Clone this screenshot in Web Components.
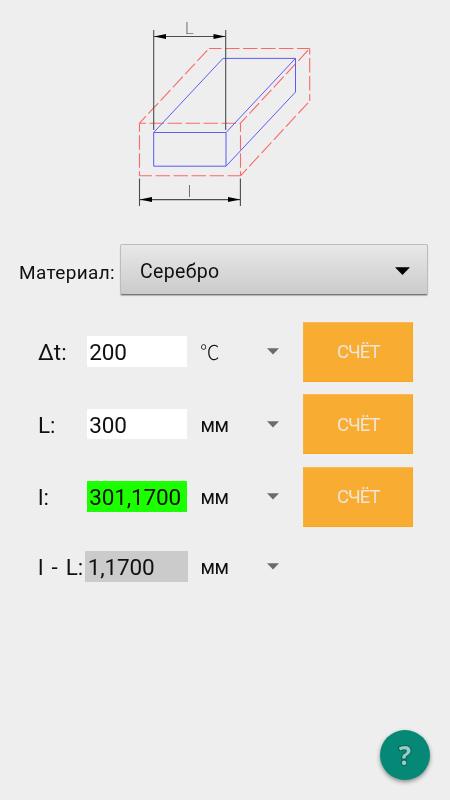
<!DOCTYPE html>
<html lang="ru">
<head>
<meta charset="utf-8">
<title>Тепловое расширение</title>
<style>
  html, body { margin: 0; height: 100%; }
  body {
    background: #eeeeee;
    color: #101010;
    font-family: Roboto, "Liberation Sans", sans-serif;
    font-weight: 380;
    overflow: hidden;
  }
</style>
</head>
<body>
<expansion-app></expansion-app>

<script>
// Drawing of the heated bar: solid = cold size, dashed = hot size
class BarDrawing extends HTMLElement {
  connectedCallback() {
    if (this.shadowRoot) return;
    this.attachShadow({ mode: 'open' }).innerHTML = `
      <style>
        :host { display: block; width: 190px; height: 210px; }
        svg { display: block; }
        .cold { stroke: #5b5bf6; stroke-width: 1; fill: none; }
        .hot { stroke: #fb6868; stroke-width: 1.1; fill: none; stroke-dasharray: 14.5 3.5; }
        .dim { stroke: #4c4c4c; stroke-width: 1.1; fill: none; }
        .arrow { fill: #000; }
        text { font-family: Roboto, sans-serif; font-weight: 200; fill: #333; text-anchor: middle; }
      </style>
      <svg width="190" height="210" viewBox="130 0 190 210">
        <g class="hot">
          <path d="M139.5 123.2H240.5" stroke-dashoffset="8"/>
          <path d="M139.5 175.8H240.5" stroke-dashoffset="2"/>
          <path d="M139.5 123.2V175.8" stroke-dashoffset="6"/>
          <path d="M240.5 123.2V175.8" stroke-dashoffset="6"/>
          <path d="M139.5 123.2L209 48.5" stroke-dashoffset="5"/>
          <path d="M209 48.5H309.7" stroke-dashoffset="2"/>
          <path d="M240.5 123.2L309.7 48.5" stroke-dashoffset="5"/>
          <path d="M309.7 48.5V101" stroke-dashoffset="8.5"/>
          <path d="M240.5 175.8L309.7 101" stroke-dashoffset="5"/>
        </g>
        <g class="cold">
          <path d="M153.7 132.5H226V166.2H153.7Z"/>
          <path d="M153.7 132.5L223 58.4H295.5L226 132.5"/>
          <path d="M295.5 58.4V92L226 166.2"/>
        </g>
        <g class="dim">
          <path d="M153.7 30V130M225.7 30V130M153.7 36.5H225.7"/>
          <path d="M139.5 178.5V206M240.4 178.5V206M139.5 199.6H240.4"/>
        </g>
        <path class="arrow" d="M154 36.5L166 34V39ZM225.5 36.5L213.5 34V39ZM139.8 199.6L152 197.1V202.1ZM240.2 199.6L228 197.1V202.1Z"/>
        <text x="189.4" y="34" font-size="17">L</text>
        <text x="189.4" y="196.8" font-size="17">l</text>
      </svg>`;
  }
}
customElements.define('bar-drawing', BarDrawing);

class MaterialSelect extends HTMLElement {
  connectedCallback() {
    if (this.shadowRoot) return;
    this.attachShadow({ mode: 'open' }).innerHTML = `
      <style>
        :host {
          display: flex;
          align-items: center;
          justify-content: space-between;
          box-sizing: border-box;
          width: 308px;
          height: 51px;
          padding: 0 17px 0 19px;
          border: 1px solid #bcbcbc;
          border-bottom: 1px solid #777;
          border-radius: 2px;
          background: linear-gradient(#e8e8e8, #cbcbcb);
          box-shadow: 0 1px 1px rgba(0, 0, 0, 0.25);
          font-size: 19.5px;
          letter-spacing: 0.35px;
        }
        span { padding-top: 3px; }
        svg { margin-top: 3px; }
      </style>
      <span><slot></slot></span>
      <svg width="15" height="8" viewBox="0 0 15 8"><path d="M0 0.3H15L7.5 8Z" fill="#000"/></svg>`;
  }
}
customElements.define('material-select', MaterialSelect);

// One line of the form: name, value, unit and an optional button
class ValueRow extends HTMLElement {
  connectedCallback() {
    if (this.shadowRoot) return;
    const button = this.hasAttribute('action') ? `<button type="button">${this.getAttribute('action')}</button>` : '';
    this.attachShadow({ mode: 'open' }).innerHTML = `
      <style>
        :host {
          display: grid;
          grid-template-columns: 47px 103px 79px 36.3px 110px;
          align-items: center;
          height: 60px;
          font-size: 22.5px;
        }
        .name { white-space: nowrap; padding-top: 1px; }
        .value {
          box-sizing: border-box;
          justify-self: center;
          width: 100px;
          height: 30.6px;
          padding-left: 2.7px;
          line-height: 32px;
          letter-spacing: -0.15px;
          background: var(--field, #fff);
        }
        :host([total]) .value { width: 103px; height: 31px; background: #cbcbcb; }
        :host([total]) .name { word-spacing: 2.4px; }
        .unit { padding-left: 12.4px; font-size: 19.5px; letter-spacing: -0.4px; padding-top: 2px; }
        svg { margin: 0; }
        button {
          height: 60px;
          padding: 1px 0 0;
          border: 1px solid #f9a716;
          border-top-color: #f9b95c;
          border-left-color: #f8b03f;
          background: #f8ac32;
          color: #f0e6d6;
          font: 380 18.5px Roboto, sans-serif;
          letter-spacing: -0.9px;
        }
      </style>
      <span class="name"><slot name="name"></slot></span>
      <span class="value"><slot></slot></span>
      <span class="unit"><slot name="unit"></slot></span>
      <svg width="12" height="7" viewBox="0 0 12 7"><path d="M0 0.2H12L6 6.6Z" fill="#6b6b6b"/></svg>
      ${button}`;
  }
}
customElements.define('value-row', ValueRow);

class HelpButton extends HTMLElement {
  connectedCallback() {
    if (this.shadowRoot) return;
    this.attachShadow({ mode: 'open' }).innerHTML = `
      <style>
        :host {
          display: flex;
          align-items: center;
          justify-content: center;
          width: 50px;
          height: 50px;
          border-radius: 50%;
          background: #058876;
          box-shadow: 0 2px 4px rgba(0, 0, 0, 0.42);
          color: #93cdc5;
          font: 700 26px "Open Sans", sans-serif;
        }
        span { -webkit-text-stroke: 2px #0a5f54; paint-order: stroke fill; }
      </style>
      <span><slot></slot></span>`;
  }
}
customElements.define('help-button', HelpButton);

class ExpansionApp extends HTMLElement {
  connectedCallback() {
    if (this.shadowRoot) return;
    this.attachShadow({ mode: 'open' }).innerHTML = `
      <style>
        /* own layer without a background: keeps glyph edges grey */
        :host { display: block; position: relative; width: 450px; height: 800px; will-change: transform; }
        bar-drawing { margin-left: 130px; }
        .page { display: flex; flex-direction: column; }
        .material {
          display: flex;
          align-items: center;
          margin: 34px 0 0 19px;
          font-size: 19px;
        }
        .material label { width: 101px; letter-spacing: 0.35px; white-space: nowrap; padding-top: 5px; }
        .form { display: grid; gap: 12.5px; margin: 26.6px 0 0 38px; }
        .celsius {
          display: inline-block;
          font-family: "Noto Sans CJK JP", sans-serif;
          font-weight: 300;
          font-size: 20.5px;
          line-height: 1;
          transform: scaleX(0.95);
          transform-origin: left;
        }
        [total] { margin-top: -2.5px; }
        help-button { position: absolute; left: 380px; top: 730px; }
      </style>
      <div class="page">
        <bar-drawing></bar-drawing>
        <div class="material">
          <label>Материал:</label>
          <material-select>Серебро</material-select>
        </div>
        <div class="form">
          <value-row action="СЧЁТ"><span slot="name">Δt:</span>200<span slot="unit" class="celsius">℃</span></value-row>
          <value-row action="СЧЁТ"><span slot="name">L:</span>300<span slot="unit">мм</span></value-row>
          <value-row action="СЧЁТ" style="--field: #1cff00"><span slot="name">l:</span>301,1700<span slot="unit">мм</span></value-row>
          <value-row total><span slot="name">l - L:</span>1,1700<span slot="unit">мм</span></value-row>
        </div>
      </div>
      <help-button>?</help-button>`;
  }
}
customElements.define('expansion-app', ExpansionApp);
</script>
</body>
</html>
